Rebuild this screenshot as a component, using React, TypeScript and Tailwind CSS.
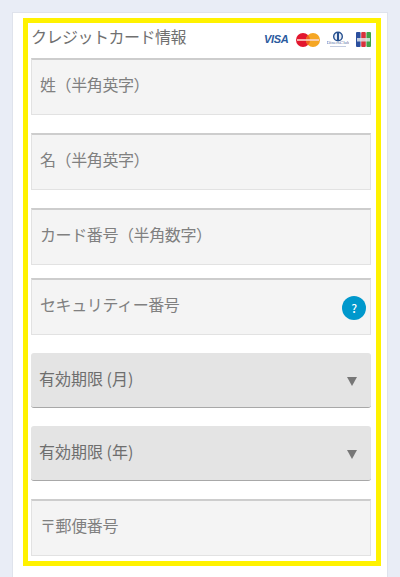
const fontJa = "font-['Noto_Sans_CJK_JP','Noto_Sans',sans-serif]";

function CardLogos() {
  return (
    <div className="flex items-center">
      <span className="w-[25px] text-[11px] font-bold italic leading-none tracking-[-0.3px] text-[#2a5a9e] font-['Liberation_Sans',sans-serif]">
        VISA
      </span>
      <svg width="24" height="14" viewBox="0 0 24 14" className="ml-[7px]">
        <circle cx="7" cy="7" r="7" fill="#e2162e" />
        <circle cx="17" cy="7" r="7" fill="#f5a623" />
        <path d="M12 2a7 7 0 0 1 0 10a7 7 0 0 1 0-10z" fill="#f0641e" />
        <rect x="1" y="6" width="22" height="2" fill="#fbd5c8" opacity="0.8" />
      </svg>
      <svg width="22" height="17" viewBox="0 0 22 17" className="ml-[7px]">
        <circle cx="11" cy="5.5" r="5" fill="#26508f" />
        <circle cx="11" cy="5.5" r="3.6" fill="#e8edf6" />
        <rect x="10" y="2" width="2" height="7" fill="#26508f" />
        <text x="11" y="13" textAnchor="middle" fontSize="5" fontFamily="Liberation Serif, serif" fill="#5c74a8">
          DinersClub
        </text>
        <rect x="3" y="15" width="16" height="1" fill="#c3cce0" />
      </svg>
      <svg width="15" height="15" viewBox="0 0 15 15" className="ml-[7px]">
        <rect width="4.6" height="15" rx="1" fill="#2b4f9e" />
        <rect x="5.2" width="4.6" height="15" rx="1" fill="#d8323c" />
        <rect x="10.4" width="4.6" height="15" rx="1" fill="#3fa24a" />
        <rect x="1" y="6" width="13" height="3.5" fill="#e8eef0" opacity="0.8" />
      </svg>
    </div>
  );
}

function Field({ label, help }: { label: string; help?: boolean }) {
  return (
    <div className="relative flex h-[57px] items-center border border-[#e2e2e2] border-t-2 border-t-[#cdcdcd] bg-[#f4f4f4] pb-[6px] pl-2 text-base tracking-[-0.4px] text-[#808080]">
      {label}
      {help && (
        <span className="absolute right-[4px] top-[16px] flex h-6 w-6 items-center justify-center rounded-full bg-[#0098cc] text-xs font-medium text-white">
          ?
        </span>
      )}
    </div>
  );
}

function SelectBox({ label }: { label: string }) {
  return (
    <div className="flex h-[55px] items-center justify-between rounded-[3px] border-b border-b-[#a8a8a8] bg-[#e4e4e4] pl-2 pr-[14px] text-base text-[#6e6e6e]">
      <span className="-mt-[5px]">{label}</span>
      <span className="mt-[3px] h-0 w-0 border-x-[5px] border-t-[9px] border-x-transparent border-t-[#777]" />
    </div>
  );
}

export default function App() {
  return (
    <div className={`h-[577px] overflow-hidden bg-[#e9edf6] px-3 pt-3 ${fontJa}`}>
      <div className="h-[600px] border-l border-r border-t border-[#dfe3ec] bg-white pl-[10px] pr-[6px] pt-[5px]">
        <div className="h-[548px] border-[5px] border-[#fff200] pl-[3px] pr-[5px]">
          <div className="flex h-[35px] items-center justify-between pb-[2px]">
            <h2 className="pb-[8px] text-base font-normal tracking-[-0.5px] text-[#707070]">クレジットカード情報</h2>
            <CardLogos />
          </div>
          <Field label="姓（半角英字）" />
          <div className="mt-[18px]">
            <Field label="名（半角英字）" />
          </div>
          <div className="mt-[18px]">
            <Field label="カード番号（半角数字）" />
          </div>
          <div className="mt-[13px]">
            <Field label="セキュリティー番号" help />
          </div>
          <div className="mt-[18px]">
            <SelectBox label="有効期限 (月)" />
          </div>
          <div className="mt-[18px]">
            <SelectBox label="有効期限 (年)" />
          </div>
          <div className="mt-[18px]">
            <Field label="〒郵便番号" />
          </div>
        </div>
      </div>
    </div>
  );
}
